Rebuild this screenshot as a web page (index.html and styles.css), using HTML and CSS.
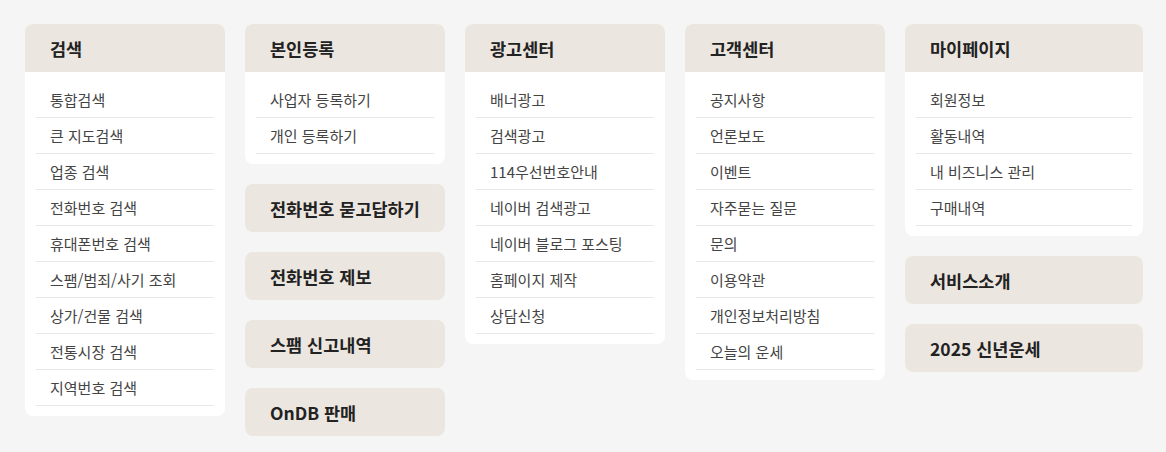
FILE: index.html
```html
<!DOCTYPE html>
<html lang="ko">
<head>
<meta charset="utf-8">
<link rel="stylesheet" href="styles.css">
</head>
<body>
<div class="sitemap">
  <div class="col">
    <div class="card">
      <div class="head">검색</div>
      <ul class="list">
        <li>통합검색</li>
        <li>큰 지도검색</li>
        <li>업종 검색</li>
        <li>전화번호 검색</li>
        <li>휴대폰번호 검색</li>
        <li>스팸/범죄/사기 조회</li>
        <li>상가/건물 검색</li>
        <li>전통시장 검색</li>
        <li>지역번호 검색</li>
      </ul>
    </div>
  </div>
  <div class="col">
    <div class="card">
      <div class="head">본인등록</div>
      <ul class="list">
        <li>사업자 등록하기</li>
        <li>개인 등록하기</li>
      </ul>
    </div>
    <div class="btn">전화번호 묻고답하기</div>
    <div class="btn">전화번호 제보</div>
    <div class="btn">스팸 신고내역</div>
    <div class="btn">OnDB 판매</div>
  </div>
  <div class="col">
    <div class="card">
      <div class="head">광고센터</div>
      <ul class="list">
        <li>배너광고</li>
        <li>검색광고</li>
        <li>114우선번호안내</li>
        <li>네이버 검색광고</li>
        <li>네이버 블로그 포스팅</li>
        <li>홈페이지 제작</li>
        <li>상담신청</li>
      </ul>
    </div>
  </div>
  <div class="col">
    <div class="card">
      <div class="head">고객센터</div>
      <ul class="list">
        <li>공지사항</li>
        <li>언론보도</li>
        <li>이벤트</li>
        <li>자주묻는 질문</li>
        <li>문의</li>
        <li>이용약관</li>
        <li>개인정보처리방침</li>
        <li>오늘의 운세</li>
      </ul>
    </div>
  </div>
  <div class="col wide">
    <div class="card">
      <div class="head">마이페이지</div>
      <ul class="list">
        <li>회원정보</li>
        <li>활동내역</li>
        <li>내 비즈니스 관리</li>
        <li>구매내역</li>
      </ul>
    </div>
    <div class="btn">서비스소개</div>
    <div class="btn">2025 신년운세</div>
  </div>
</div>
</body>
</html>
```

FILE: styles.css
```css
html, body {
  margin: 0;
  padding: 0;
  background: #f5f5f6;
  font-family: "Noto Sans CJK KR", "Noto Sans", sans-serif;
}
.sitemap {
  display: flex;
  align-items: flex-start;
  gap: 20px;
  padding: 24px 25px;
}
.col {
  flex: 0 0 200px;
  width: 200px;
  display: flex;
  flex-direction: column;
  gap: 20px;
}
.col.wide {
  flex-basis: 238px;
  width: 238px;
}
.card {
  background: #ffffff;
  border-radius: 8px;
  overflow: hidden;
}
.head, .btn {
  height: 48px;
  display: flex;
  align-items: center;
  padding-left: 25px;
  background: #ece6e0;
  color: #222222;
  font-size: 17.5px;
  font-weight: 700;
}
.btn {
  border-radius: 8px;
}
.list {
  list-style: none;
  margin: 0;
  padding: 10px 11px 10px;
}
.list li {
  height: 34px;
  padding: 0 0 1px 14px;
  display: flex;
  align-items: center;
  border-bottom: 1px solid #e8e8e8;
  font-size: 15px;
  color: #444444;
}
```
